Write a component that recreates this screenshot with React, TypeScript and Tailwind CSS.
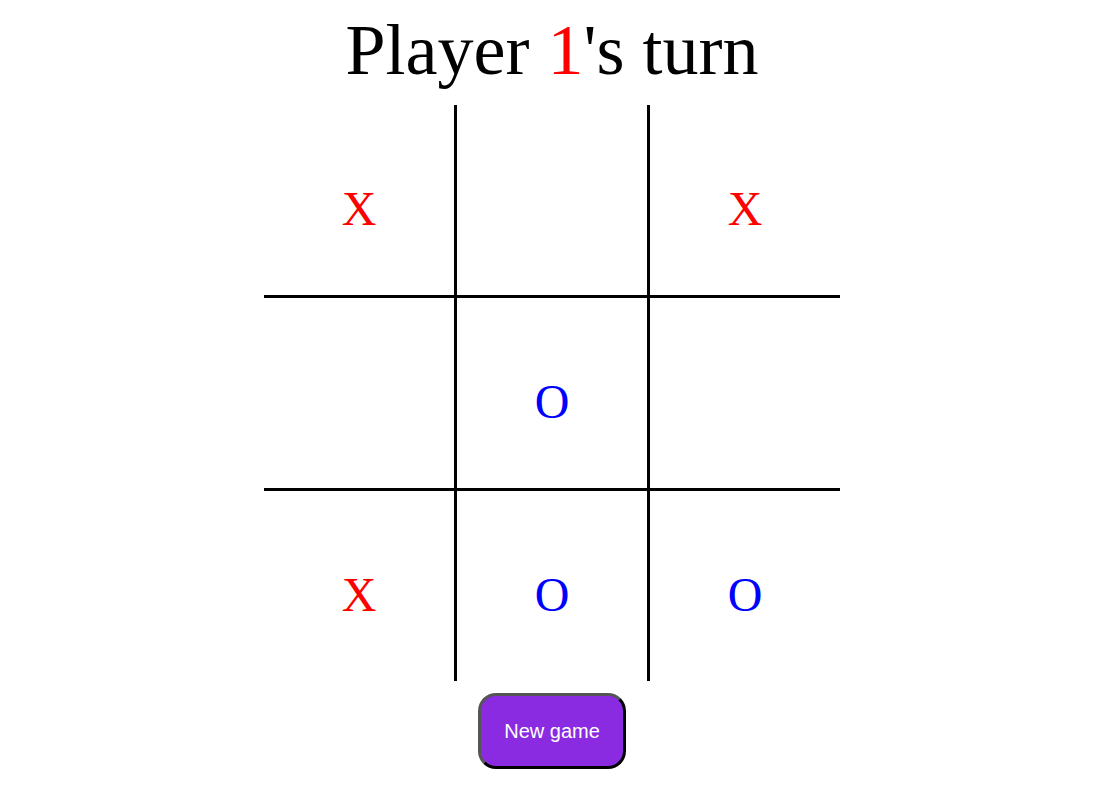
export default function App() {
  const board = ["X", "", "X", "", "O", "", "X", "O", "O"];

  return (
    <main className="min-h-screen bg-white flex flex-col items-center">
      {/* title */}
      <h1 className="mt-[9px] mb-[13px] text-[72px] leading-[83px] text-black font-['Liberation_Serif',serif]">
        Player <span className="text-[#ff0000]">1</span>'s turn
      </h1>

      {/* board */}
      <div className="grid grid-cols-[190px_196px_190px] grid-rows-[190px_196px_190px] w-[576px]">
        {board.map((v, i) => {
          const col = i % 3;
          const row = Math.floor(i / 3);
          return (
            <div
              key={i}
              className={
                "flex items-center justify-center pt-[18px] border-black text-[48px] leading-none font-['Liberation_Serif',serif] " +
                (col === 1 ? "border-x-[3px] " : "") +
                (row === 1 ? "border-y-[3px] " : "") +
                (v === "X" ? "text-[#ff0000]" : "text-[#0000ff]")
              }
            >
              {v}
            </div>
          );
        })}
      </div>

      {/* button */}
      <button className="mt-[12px] w-[148px] h-[76px] rounded-[18px] bg-[#8a2be2] border-[3px] border-t-[#555555] border-l-[#555555] border-r-black border-b-black text-white text-[20px] font-['Liberation_Sans',Arial,sans-serif]">
        New game
      </button>
    </main>
  );
}
